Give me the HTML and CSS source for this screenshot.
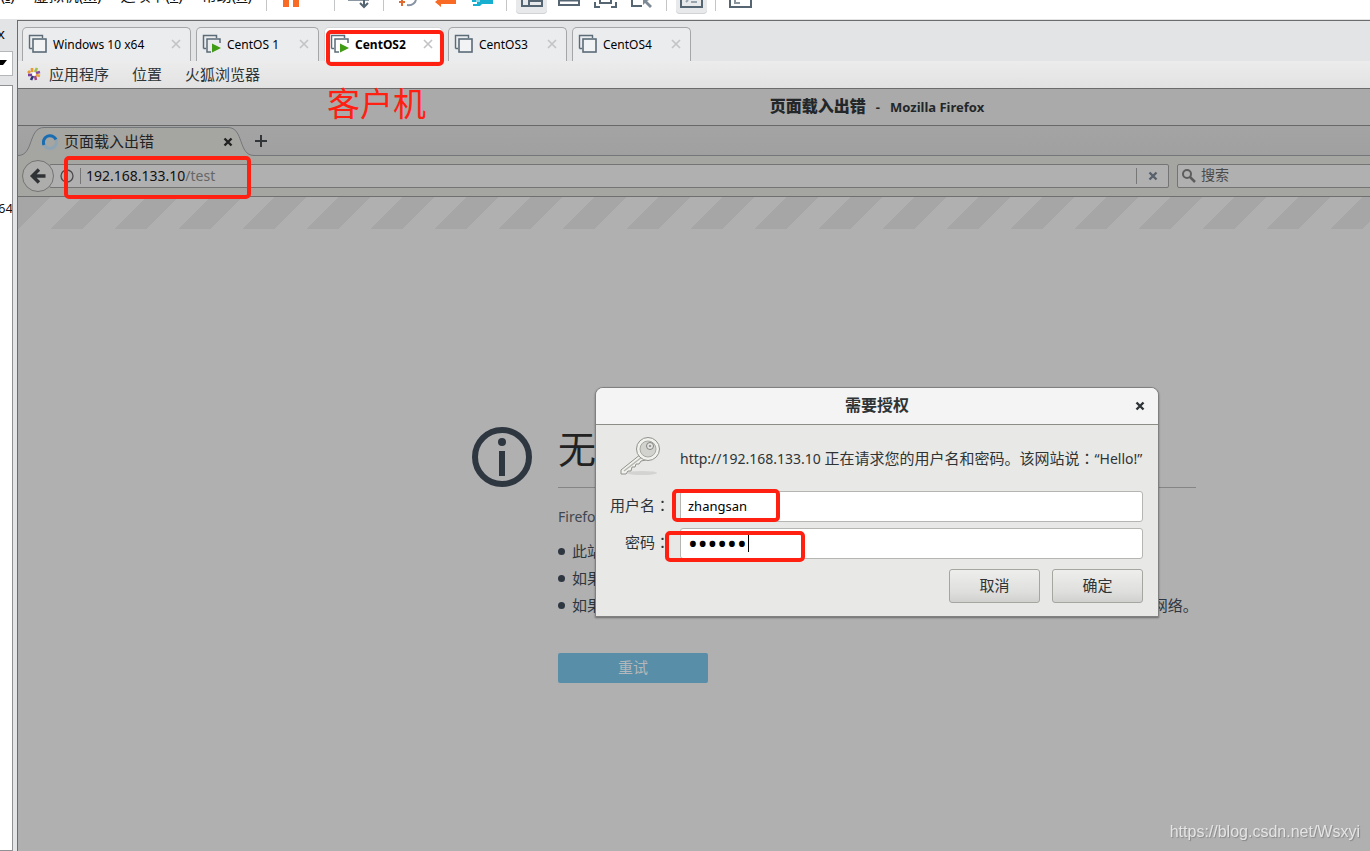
FILE: index.html
```
<!DOCTYPE html>
<html lang="zh-CN">
<head>
<meta charset="utf-8">
<title>CentOS2</title>
<link rel="stylesheet" href="styles.css">
</head>
<body>
<svg class="defs" aria-hidden="true">
  <symbol id="vm" viewBox="0 0 20 20"><path d="M1.5 14.5V1.5H14.5V4M1.5 14.5H4" fill="none" stroke="#5b6b78" stroke-width="1.4"/><rect x="5" y="5" width="13" height="13" fill="#f1f3f4" stroke="#5b6b78" stroke-width="1.6"/></symbol>
  <symbol id="vm-on" viewBox="0 0 20 20"><path d="M1.5 14.5V1.5H14.5V4M1.5 14.5H4M9 18H5V5H18V9" fill="none" stroke="#5b6b78" stroke-width="1.5"/><path d="M10 9.500V18.500L19 14Z" fill="#3f9c14"/></symbol>
  <symbol id="thin-x" viewBox="0 0 10 10"><path d="M1 1L9 9M9 1L1 9" fill="none" stroke="#c3c4c6" stroke-width="1.7"/></symbol>
  <symbol id="bold-x" viewBox="0 0 10 10"><path d="M1.500 1.500L8.500 8.500M8.500 1.500L1.500 8.500" fill="none" stroke="currentColor" stroke-width="2.400"/></symbol>
</svg>

<header class="toolbar">
  <nav class="menus"><span>(<u>I</u>)</span><span>虚拟机(<u>M</u>)</span><span>选项卡(<u>T</u>)</span><span>帮助(<u>H</u>)</span></nav>
  <i class="sep"></i>
  <button class="tool pause" aria-label="暂停"><svg viewBox="0 0 31 16"><path d="M7 0H13V7H7ZM17 0H23V7H17Z" fill="#f96b25"/></svg></button>
  <i class="sep"></i>
  <button class="tool" aria-label="发送"><svg viewBox="0 0 31 16"><path d="M4 .5H25" stroke="#8b98a4"/><path d="M20 0V6M16 3L20 7L24 3" fill="none" stroke="#566572" stroke-width="2"/></svg></button>
  <i class="sep"></i>
  <div class="group">
    <button class="tool" aria-label="快照"><svg viewBox="0 0 31 16"><path d="M6 2H12M9 0V6" stroke="#e06a30" stroke-width="2"/><path d="M14 5Q21 6 23 0" fill="none" stroke="#8593a2" stroke-width="2"/></svg></button>
    <button class="tool" aria-label="恢复"><svg viewBox="0 0 31 16"><path d="M5 2L11 -3V0H26V4H11V7Z" fill="#f96b25"/></svg></button>
    <button class="tool" aria-label="管理快照"><svg viewBox="0 0 31 16"><path d="M5 0H26V4H15L13 6H6V4H10V2H5Z" fill="#16afd0"/><path d="M9 1H13" stroke="#fff"/></svg></button>
  </div>
  <i class="sep"></i>
  <div class="group">
    <button class="tool on" aria-label="库"><svg viewBox="0 0 31 16"><path d="M6 0V6H26V0M13 0V6M14 1H25" fill="none" stroke="#566572" stroke-width="2"/></svg></button>
    <button class="tool" aria-label="缩略图"><svg viewBox="0 0 31 16"><path d="M6 0V5H26V0M6 .5H26" fill="none" stroke="#566572" stroke-width="2"/></svg></button>
    <button class="tool" aria-label="全屏"><svg viewBox="0 0 31 16"><path d="M5 2V7H10M21 7H26V2M10 0V3H21V0" fill="none" stroke="#566572" stroke-width="2"/></svg></button>
    <button class="tool" aria-label="Unity"><svg viewBox="0 0 31 16"><path d="M5 0V6H15" fill="none" stroke="#566572" stroke-width="2"/><path d="M16 0V5L18 3L23 8L25 6L20 1L22 0Z" fill="#7d8994"/></svg></button>
  </div>
  <i class="sep"></i>
  <button class="tool on" aria-label="控制台"><svg viewBox="0 0 31 16"><path d="M5 0V7H26V0" fill="none" stroke="#566572" stroke-width="2"/><path d="M10 2L12 0M15 2H21" stroke="#9aa4ad" stroke-width="2"/></svg></button>
  <i class="sep"></i>
  <button class="tool" aria-label="拉伸"><svg viewBox="0 0 31 16"><path d="M5 0V7H26V0" fill="none" stroke="#566572" stroke-width="2"/><path d="M10 0V3H15" fill="none" stroke="#8a96a0" stroke-width="2"/></svg></button>
</header>

<div class="shell">
  <aside class="library">
    <div class="lib-close">x</div>
    <div class="lib-combo"><svg viewBox="0 0 12 24"><path d="M0 8H7L3 13H0Z"/></svg></div>
    <div class="lib-tree">64</div>
  </aside>

  <main class="vm">
    <div class="tabs">
      <div class="tab wide"><svg class="vm-icon"><use href="#vm"/></svg><span>Windows 10 x64</span><button aria-label="关闭"><svg><use href="#thin-x"/></svg></button></div>
      <div class="tab"><svg class="vm-icon"><use href="#vm-on"/></svg><span>CentOS 1</span><button aria-label="关闭"><svg><use href="#thin-x"/></svg></button></div>
      <div class="tab active"><svg class="vm-icon"><use href="#vm-on"/></svg><span>CentOS2</span><button aria-label="关闭"><svg><use href="#thin-x"/></svg></button></div>
      <div class="tab"><svg class="vm-icon"><use href="#vm"/></svg><span>CentOS3</span><button aria-label="关闭"><svg><use href="#thin-x"/></svg></button></div>
      <div class="tab"><svg class="vm-icon"><use href="#vm"/></svg><span>CentOS4</span><button aria-label="关闭"><svg><use href="#thin-x"/></svg></button></div>
    </div>

    <div class="guest">
      <nav class="gnome">
        <svg class="gnome-logo" viewBox="0 0 14 14"><g stroke-width="2.600"><path d="M5 5V1M3 4L1 6" stroke="#e89b35"/><path d="M8 5L10 1" stroke="#9fbe4a"/><path d="M9 6L13 5" stroke="#8a4fa0"/><path d="M9 8L13 9" stroke="#e8a33a"/><path d="M8 9L9 13" stroke="#a04a86"/><path d="M6 9L4 13" stroke="#2e3a78"/><path d="M5 8L1 8" stroke="#7b3f99"/></g><circle cx="7" cy="7" r="1.500" fill="#fff"/></svg>
        <span>应用程序</span><span>位置</span><span>火狐浏览器</span>
      </nav>
      <div class="win-title"><b>页面载入出错</b><span>-</span><span>Mozilla Firefox</span></div>
      <div class="ff-tabs">
        <div class="ff-tab">
          <svg class="ff-shape" viewBox="0 0 236 31"><path d="M0 29.500C16 29.500 10 1.500 26 1.500H210C226 1.500 220 29.500 236 29.500V31H0Z" fill="#a5a5a1"/><path d="M0 29.500C16 29.500 10 1.500 26 1.500H210C226 1.500 220 29.500 236 29.500" fill="none" stroke="#74777a"/></svg>
          <svg class="spinner" viewBox="0 0 16 16"><circle cx="8" cy="8" r="6.500" fill="none" stroke="#8ea4b5" stroke-width="3"/><path d="M2 11A6.500 6.500 0 0 1 14 5.500" fill="none" stroke="#1a6db0" stroke-width="3"/></svg>
          <span>页面载入出错</span>
          <button aria-label="关闭标签页"><svg><use href="#bold-x"/></svg></button>
        </div>
        <button class="ff-new" aria-label="新建标签页"><svg viewBox="0 0 14 14"><path d="M7 1V13M1 7H13" stroke="#333638" stroke-width="2"/></svg></button>
      </div>
      <div class="ff-nav">
        <button class="back" aria-label="后退"><svg viewBox="0 0 32 32"><path d="M17 9L10 16L17 23M11 16H24" fill="none" stroke="#303336" stroke-width="3.600"/></svg></button>
        <div class="url">
          <svg class="info" viewBox="0 0 14 14"><circle cx="7" cy="7" r="6" fill="none" stroke="#4c4c4c" stroke-width="1.300"/><path d="M7 6V11M7 3V5" stroke="#4c4c4c" stroke-width="1.300"/></svg>
          <div class="address">192.168.133.10<em>/test</em></div>
          <button class="stop" aria-label="停止"><svg><use href="#bold-x"/></svg></button>
        </div>
        <label class="search"><svg viewBox="0 0 14 14"><circle cx="5" cy="5" r="4" fill="none" stroke="#5d5d5d" stroke-width="2"/><path d="M8 8L13 13" stroke="#5d5d5d" stroke-width="2.500"/></svg><input type="text" placeholder="搜索" aria-label="搜索"></label>
      </div>
      <div class="page">
        <div class="stripes"></div>
        <article class="error">
          <svg class="big-info" viewBox="0 0 60 60"><circle cx="30" cy="30" r="27" fill="none" stroke="#2e3640" stroke-width="6"/><circle cx="30" cy="15" r="4" fill="#2e3640"/><path d="M30 24V49" stroke="#2e3640" stroke-width="6"/></svg>
          <h1>无法连接</h1>
          <p>Firefox 无法建立到 192.168.133.10 服务器的连接。</p>
          <ul>
            <li>此站点暂时不可用或者太忙。请稍后重试。</li>
            <li>如果您无法载入任何页面，请检查您计算机的网络连接。</li>
            <li>如果您的计算机受到防火墙或者代理服务器的保护，则请您确定 Firefox 已经被授权访问网络。</li>
          </ul>
          <button class="retry">重试</button>
        </article>
        <form class="dialog" aria-labelledby="dialog-title">
          <header><h2 id="dialog-title">需要授权</h2><button type="button" aria-label="关闭"><svg><use href="#bold-x"/></svg></button></header>
          <div class="dialog-body">
            <svg class="key" viewBox="0 0 42 42"><ellipse cx="22" cy="37" rx="15" ry="2" fill="#d3d3d1"/><path d="M21 18L1 34V38H6L8 35L11 35L12 31L15 31L16 28L19 28L21 25L26 24Z" fill="#f1f1ed" stroke="#90908c"/><path d="M4 35L22 21" stroke="#b5b5b0" stroke-width="1.500"/><circle cx="28" cy="13" r="11.500" fill="#f1f1ed" stroke="#90908c"/><circle cx="28" cy="13" r="8" fill="#d2d2ce" stroke="#a8a8a3"/><circle cx="30" cy="10" r="3.500" fill="#e8e8e6" stroke="#80807c"/><circle cx="30" cy="10" r="1.300" fill="#999"/></svg>
            <p>http://192.168.133.10 <span>正在请求您的用户名和密码。该网站说<b class="colon" lang="zh-TW">：</b></span>“Hello!”</p>
            <label for="user">用户名<b class="colon" lang="zh-TW">：</b></label><input id="user" type="text" value="zhangsan">
            <label for="pass">密码<b class="colon" lang="zh-TW">：</b></label><div class="pass-field"><input id="pass" type="password" value="123456"><i class="caret"></i></div>
            <div class="actions"><button type="button">取消</button><button type="submit">确定</button></div>
          </div>
          <i class="mark mark-user"></i><i class="mark mark-pass"></i>
        </form>
      </div>
    </div>
    <i class="mark mark-tab"></i><i class="mark mark-url"></i>
    <div class="note">客户机</div>
  </main>
</div>
<div class="watermark">https://blog.csdn.net/Wsxyi</div>
</body>
</html>
```

FILE: styles.css
```
* { box-sizing: border-box; }
body {
  margin: 0;
  height: 100vh;
  display: flex;
  flex-direction: column;
  overflow: hidden;
  background: #e3e4e6;
  font: 14px/20px "Noto Sans", "Noto Sans CJK SC", sans-serif;
  color: #2e3436;
}
button { border: 0; padding: 0; background: none; font: inherit; color: inherit; display: block; }
svg { display: block; }
h1, h2, p, ul { margin: 0; padding: 0; }
.defs { position: absolute; width: 0; height: 0; }

/* host toolbar, scrolled partly out of the window */
.toolbar { display: flex; height: 19px; flex: none; overflow: hidden; background: #fff; color: #111; }
.menus { display: flex; gap: 19px; width: 258px; margin-top: -15px; font-size: 15px; white-space: nowrap; justify-content: flex-end; padding-right: 6px; }
.sep { width: 1px; height: 11px; background: #c4c5c7; margin: 0 9px 0 8px; flex: none; }
.tool { width: 31px; height: 14px; flex: none; }
.tool svg { width: 31px; height: 16px; }
.tool.on { background: #e8e9ea; border-radius: 0 0 4px 4px; box-shadow: inset 0 -1px #d2d3d4; }
.pause { margin-right: 19px; }
.group { display: flex; gap: 6px; }

.shell { flex: 1; display: flex; min-height: 0; }
.library { width: 17px; flex: none; padding-right: 4px; display: flex; flex-direction: column; font-size: 13px; color: #111; overflow: hidden; }
.lib-close { height: 32px; padding-top: 4px; text-indent: -3px; font-size: 15px; }
.lib-combo { height: 25px; background: #fff; border: 1px solid #b5b6b8; border-left: 0; margin-bottom: 9px; }
.lib-combo svg { width: 12px; height: 24px; }
.lib-tree { flex: 1; background: #fff; border: 1px solid #8f9195; border-left: 0; padding-top: 112px; text-indent: -2px; overflow: hidden; }

.vm { flex: 1; min-width: 0; position: relative; display: flex; flex-direction: column; border: 1px solid #6c6c6c; border-width: 1px 0 0 1px; overflow: hidden; margin-top: 1px; }
.tabs { height: 40px; flex: none; display: flex; gap: 5px; padding: 6px 4px 0; }
.tab { width: 119px; display: flex; align-items: center; padding: 0 9px 0 5px; border: 1px solid #a5a6a8; border-bottom: 0; border-radius: 5px 5px 0 0; background: #ebecee; font-size: 12px; color: #000; white-space: nowrap; }
.tab.wide { width: 169px; }
.tab:nth-child(2) { width: 123px; }
.tab.active { background: #fff; font-weight: bold; border-color: #d5d6d8; }
.tab span { flex: 1; margin-left: 5px; }
.vm-icon { width: 20px; height: 20px; margin-bottom: 2px; }
.tab button { margin-bottom: 2px; }
.tab button svg { width: 10px; height: 10px; }

/* the guest screen is wider than the host window and is clipped by it */
.guest { flex: 1; min-height: 0; display: flex; flex-direction: column; margin-right: -366px; }
.gnome { height: 28px; flex: none; display: flex; align-items: center; gap: 23px; padding: 0 0 2px 9px; font-size: 15px; color: #2e3436; background: linear-gradient(#ececec, #e2e2e2); border-bottom: 1px solid #6c6c6c; }
.gnome-logo { width: 14px; height: 14px; margin-right: -15px; }
.win-title { height: 37px; flex: none; display: flex; justify-content: center; gap: 10px; background: #aaa; border-bottom: 1px solid #686868; font-size: 13px; line-height: 36px; font-weight: bold; color: #232729; }
.win-title b { font-size: 16px; line-height: 34px; }
.ff-tabs { height: 30px; flex: none; display: flex; background: linear-gradient(#a4a4a4, #a0a0a0); border-bottom: 1px solid #74777a; }
.ff-tab { position: relative; width: 236px; height: 31px; display: flex; align-items: center; gap: 6px; padding: 0 21px 0 24px; font-size: 15px; color: #222; }
.ff-tab > * { position: relative; }
.ff-tab .ff-shape { position: absolute; inset: 0; width: 236px; height: 31px; }
.ff-tab span { flex: 1; padding-bottom: 2px; }
.spinner { width: 16px; height: 16px; }
.ff-tab button svg, .dialog header button svg, .stop svg { width: 10px; height: 10px; }
.ff-new svg { width: 14px; height: 14px; }
.ff-nav { height: 41px; flex: none; display: flex; align-items: center; padding-left: 4px; background: #a5a5a1; border-bottom: 1px solid #6f6f6f; }
.back { width: 32px; height: 32px; flex: none; border: 1px solid #747474; border-radius: 50%; background: #adadab; z-index: 1; }
.back svg { width: 30px; height: 30px; }
.url, .search { height: 24px; display: flex; align-items: center; background: #b0b0b0; border: 1px solid #747474; border-radius: 2px; }
.url { flex: 1; margin: 0 8px 0 -5px; padding-left: 10px; }
.info { width: 14px; height: 14px; }
.address { flex: 1; margin-left: 6px; padding-left: 5px; border-left: 1px solid #777; line-height: 16px; color: #111; }
.address em { font-style: normal; color: #666; }
.stop { width: 32px; height: 16px; border-left: 1px solid #777; display: grid; place-items: center; color: #56616c; }
.search { flex: 0 0 559px; padding-left: 4px; gap: 5px; }
.search svg { width: 14px; height: 14px; }
.search input { border: 0; background: none; padding: 0 0 2px; font: inherit; outline: 0; }
.search input::placeholder { color: #4a4a4a; opacity: 1; }

.page { flex: 1; position: relative; background: #b0b0b0; }
.stripes { height: 32px; background: linear-gradient(135deg, #a6a6a6 25%, #b0b0b0 25% 50%, #a6a6a6 50% 75%, #b0b0b0 75%) 0 0 / 64px 64px; }
.error { position: relative; width: 638px; margin: 196px auto 0; font-size: 15px; color: #2e3640; white-space: nowrap; }
.big-info { position: absolute; left: -86px; top: 2px; width: 60px; height: 60px; }
.error h1 { height: 63px; border-bottom: 1px solid #858585; font-size: 38px; line-height: 46px; font-weight: 400; color: #222; }
.error p { margin-top: 19px; font-size: 14px; color: #40464e; }
.error ul { margin-top: 11px; list-style: none; line-height: 27px; }
.error li { display: flex; align-items: center; gap: 7px; }
.error li::before { content: ""; width: 7px; height: 7px; flex: none; border-radius: 50%; background: #2e3640; }
.retry { width: 150px; height: 30px; margin-top: 34px; padding-bottom: 2px; border-radius: 2px; background: #588ea8; color: #b4b8ba; }

.dialog { position: absolute; left: 50%; top: 190px; width: 564px; margin-left: -282px; border: 1px solid #808080; border-radius: 8px 8px 0 0; background: #e8e8e6; box-shadow: 0 1px 2px #0006; }
.dialog header { height: 37px; display: flex; align-items: center; border-bottom: 1px solid #8d8d88; border-radius: 7px 7px 0 0; background: #f4f4f4; padding: 0 13px 0 23px; }
.dialog h2 { flex: 1; text-align: center; font-size: 16px; line-height: 20px; padding-bottom: 2px; }
.dialog-body { display: grid; grid-template-columns: 58px 1fr; column-gap: 13px; row-gap: 6px; align-items: center; padding: 0 15px 13px 13px; }
.key { width: 42px; height: 42px; margin: 3px 0 0 11px; }
.dialog p { height: 60px; line-height: 66px; white-space: nowrap; }
.dialog p span { font-size: 15px; }
.colon { font-family: "Noto Sans CJK TC", sans-serif; font-weight: normal; line-height: 20px; }
.dialog label { justify-self: end; margin-right: -3px; padding-bottom: 4px; white-space: nowrap; font-size: 15px; line-height: 24px; }
.dialog input { width: 100%; height: 31px; display: block; padding: 0 8px 2px 7px; border: 1px solid #b5b5b1; border-radius: 3px; background: #fff; font: 13px/20px "Noto Sans", sans-serif; color: #000; outline: 0; }
.dialog #pass { font-size: 26px; }
.pass-field { position: relative; }
.caret { position: absolute; left: 68px; top: 6px; width: 1px; height: 18px; background: #000; }
.actions { grid-column: 1 / 3; display: flex; justify-content: flex-end; gap: 12px; margin-top: 4px; }
.actions button { width: 91px; height: 34px; padding-bottom: 2px; border: 1px solid #a6a6a1; border-radius: 3px; background: linear-gradient(#eeeeec, #dededc 70%, #d0d0ce); font-size: 15px; }

/* red annotations */
.mark { position: absolute; border: 4px solid #ff2012; border-radius: 5px; pointer-events: none; }
.mark-tab { left: 308px; top: 9px; width: 118px; height: 36px; }
.mark-url { left: 46px; top: 135px; width: 187px; height: 43px; }
.mark-user { left: 76px; top: 101px; width: 108px; height: 33px; }
.mark-pass { left: 69px; top: 143px; width: 140px; height: 31px; }
.note { position: absolute; left: 309px; top: 61px; font: 33px/40px "Noto Sans CJK SC", sans-serif; color: #ff2012; }
.watermark { position: fixed; right: 10px; bottom: 9px; font: 16px/20px "Liberation Sans", sans-serif; color: #e4e4e4; text-shadow: 1px 1px 1px #888; }
```
